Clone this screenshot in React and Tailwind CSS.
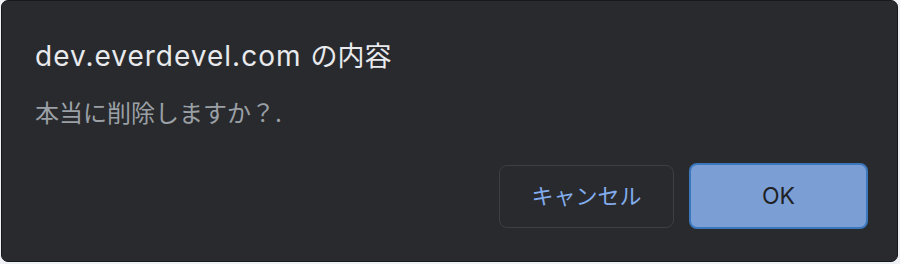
export default function App() {
  const font = { fontFamily: "Inter, 'Noto Sans CJK JP', sans-serif" };

  return (
    <div className="w-[900px] h-[264px] bg-[#eef1f6] flex flex-col">
      <div className="ml-px w-[897px] h-[262px] flex flex-col bg-[#292a2d] border border-[#17181a] rounded-[7px]" style={font}>
        <div className="pt-[38px] pl-[33px] text-[28px] leading-[34px] text-[#e8eaed] flex items-baseline">
          <span className="tracking-[1px]">dev.everdevel.com</span>
          <span className="ml-[9px] text-[27px]">の内容</span>
        </div>
        <div className="mt-[25px] pl-[33px] text-[24px] leading-[30px] text-[#9aa0a6]">
          本当に削除しますか？.
        </div>
        <div className="mt-[34px] pr-[29px] flex justify-end items-center gap-[15px]">
          <button className="w-[175px] h-[63px] rounded-[8px] border border-[#3c4043] text-[22px] text-[#82acec]">
            キャンセル
          </button>
          <button className="w-[179px] h-[66px] rounded-[8px] border-2 border-[#3a77bd] bg-[#7b9fd5] text-[23px] text-[#202124]">
            OK
          </button>
        </div>
      </div>
    </div>
  );
}
